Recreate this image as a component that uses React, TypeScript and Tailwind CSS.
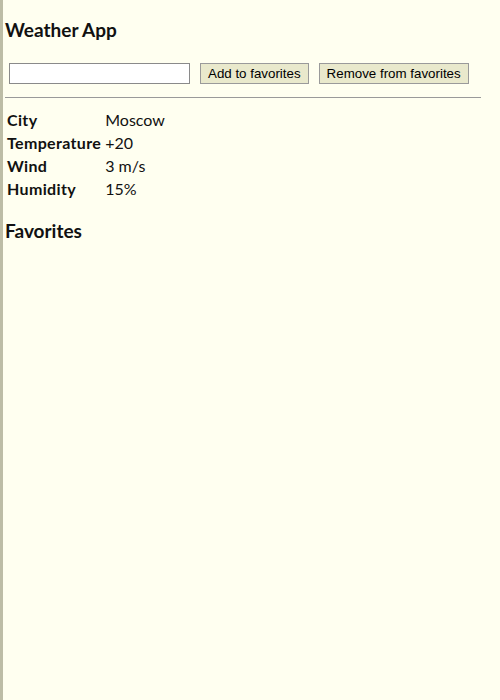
import React from 'react';

const rows = [
  { label: 'City', value: 'Moscow' },
  { label: 'Temperature', value: '+20' },
  { label: 'Wind', value: '3 m/s' },
  { label: 'Humidity', value: '15%' },
];

const App: React.FC = () => {
  return (
    <div className="min-h-[700px] bg-[#fffff0] border-l-[3px] border-[#bdbda6] pl-[2px] pt-[18px] font-['Lato',sans-serif] text-[#111]">
      {/* Header */}
      <h3 className="text-[19px] font-bold leading-[24px]">Weather App</h3>

      {/* Search / favorites controls */}
      <div className="flex items-center mt-[21px] pl-[4px] gap-[10px] font-['Liberation_Sans',sans-serif] text-[13.333px]">
        <input
          type="text"
          className="w-[181px] h-[21px] bg-white border border-[#8a8a8a] outline-none"
        />
        <button className="h-[21px] px-[7px] bg-[#e9e9cc] border border-[#9a9a9a] text-black">
          Add to favorites
        </button>
        <button className="h-[21px] px-[7px] bg-[#e9e9cc] border border-[#9a9a9a] text-black">
          Remove from favorites
        </button>
      </div>

      <hr className="w-[476px] mt-[13px] border-t border-[#9a9a9a]" />

      {/* Weather info */}
      <table className="mt-[10px] ml-[2px] text-[16px] leading-[23px]">
        <tbody>
          {rows.map((r) => (
            <tr key={r.label}>
              <td className="font-bold tracking-[0.35px] p-0 pr-[4px]">{r.label}</td>
              <td className="p-0">{r.value}</td>
            </tr>
          ))}
        </tbody>
      </table>

      <h3 className="text-[19px] font-bold leading-[24px] mt-[19px]">Favorites</h3>
    </div>
  );
};

export default App;
